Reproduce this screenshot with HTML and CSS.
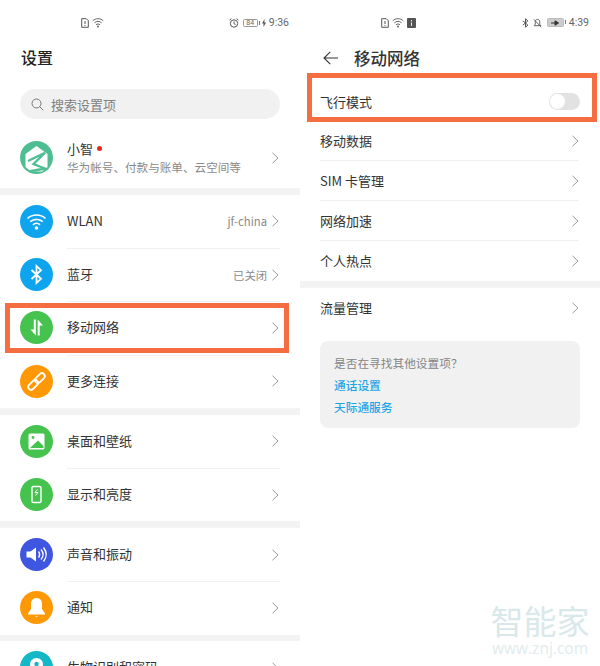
FILE: index.html
```html
<!DOCTYPE html>
<html lang="zh-CN">
<head>
<meta charset="utf-8">
<title>设置</title>
<link rel="stylesheet" href="styles.css">
</head>
<body>
<svg class="defs" width="0" height="0" aria-hidden="true">
  <symbol id="chev" viewBox="0 0 7 12"><path d="M.5 .8 6 6 .5 11.2" fill="none" stroke="#999" stroke-width="1"/></symbol>
</svg>
<main class="page">
  <section class="screen">
    <div class="status">
      <div class="status-left">
        <svg class="si" width="8" height="10" viewBox="0 0 8 10"><path d="M.7.7H5.3L7.3 2.7V9.3H.7Z" fill="none" stroke="#555"/><path d="M4 3V6M4 7V8" stroke="#555"/></svg>
        <svg class="si" width="12" height="10" viewBox="0 0 12 10"><path d="M.7 2.8C3.700 0 8.300 0 11.300 2.800M2.400 4.800C4.500 2.900 7.500 2.900 9.600 4.800M4 6.800C5.200 5.700 6.800 5.700 8 6.800" fill="none" stroke="#666"/><circle cx="6" cy="8.600" r="1" fill="#666"/></svg>
      </div>
      <div class="status-right">
        <svg class="si" width="10" height="10" viewBox="0 0 10 10"><circle cx="5" cy="5.500" r="3.700" fill="none" stroke="#555"/><path d="M5 3.500V5.700L6.500 6.500M.6 2.200 2.400.6M9.400 2.200 7.600.6" fill="none" stroke="#555"/></svg>
        <span class="batt"><span class="batt-num">84</span></span>
        <svg class="bolt" width="4" height="8" viewBox="0 0 4 8"><path d="M2.500 0 0 4.500H1.600L1.500 8 4 3.500H2.400Z" fill="#555"/></svg>
        <span class="time">9:36</span>
      </div>
    </div>
    <h1 class="page-title">设置</h1>
    <div class="search">
      <svg width="13" height="13" viewBox="0 0 13 13"><circle cx="5.500" cy="5.500" r="4.500" fill="none" stroke="#777"/><path d="M8.800 8.800 12.300 12.300" stroke="#777"/></svg>
      <span>搜索设置项</span>
    </div>
    <div class="profile">
      <svg class="icon" viewBox="0 0 33 33">
        <circle cx="16.500" cy="16.500" r="16.500" fill="#4fbd92"/>
        <path d="M16.500 5 27.500 13V26L22 30.500H11L5.500 26V13Z" fill="#fff"/>
        <path d="M8 20 25 11.800 13.500 23 25 27.500 9 30.500" fill="none" stroke="#4fbd92" stroke-width="2.300"/>
      </svg>
      <div class="profile-text">
        <div class="profile-name">小智<span class="red-dot"></span></div>
        <div class="profile-sub">华为帐号、付款与账单、云空间等</div>
      </div>
      <svg class="chev"><use href="#chev"/></svg>
    </div>

    <div class="band"></div>
    <div class="group">
      <div class="row">
        <span class="badge blue"><svg viewBox="0 0 33 33"><path d="M7.500 13.500C12.500 8.800 20.500 8.800 25.500 13.500M10.300 16.700C13.800 13.500 19.200 13.500 22.700 16.700M13 19.800C15 18 18 18 20 19.800" fill="none" stroke="#fff" stroke-width="1.700"/><circle cx="16.500" cy="23" r="1.800" fill="#fff"/></svg></span>
        <span class="label">WLAN</span><span class="value">jf-china</span>
        <svg class="chev"><use href="#chev"/></svg>
      </div>
      <div class="row">
        <span class="badge blue"><svg viewBox="0 0 33 33"><path d="M11.500 12 21 20.800 16.500 25V8L21 12.200 11.500 21" fill="none" stroke="#fff" stroke-width="1.800"/></svg></span>
        <span class="label">蓝牙</span><span class="value">已关闭</span>
        <svg class="chev"><use href="#chev"/></svg>
      </div>
      <div class="row">
        <span class="badge green"><svg viewBox="0 0 33 33"><path d="M15.800 8.500V24.500L10.500 18.500H13.800V8.500ZM17.700 24.500V8.500L23 14.500H19.700V24.500Z" fill="#fff"/></svg></span>
        <span class="label">移动网络</span>
        <svg class="chev"><use href="#chev"/></svg>
      </div>
      <div class="row">
        <span class="badge orange"><svg viewBox="0 0 33 33"><g fill="none" stroke="#fff" stroke-width="1.800" transform="rotate(-45 16.500 16.500)"><rect x="6" y="13.600" width="11.500" height="5.800" rx="2.900"/><rect x="15.500" y="13.600" width="11.500" height="5.800" rx="2.900"/></g></svg></span>
        <span class="label">更多连接</span>
        <svg class="chev"><use href="#chev"/></svg>
      </div>
    </div>

    <div class="band"></div>
    <div class="group">
      <div class="row">
        <span class="badge green"><svg viewBox="0 0 33 33"><rect x="8.500" y="8.500" width="16" height="16" rx="1.500" fill="#fff"/><circle cx="13" cy="12.500" r="1.400" fill="#46c24f"/><path d="M10 23 18 15.500 23.500 21V23Z" fill="#46c24f"/></svg></span>
        <span class="label">桌面和壁纸</span>
        <svg class="chev"><use href="#chev"/></svg>
      </div>
      <div class="row">
        <span class="badge green"><svg viewBox="0 0 33 33"><rect x="12" y="8.500" width="9" height="16" rx="1.200" fill="none" stroke="#fff" stroke-width="1.400"/><path d="M17.500 11.500 15 14.500H18L15.500 17.500" fill="none" stroke="#fff"/></svg></span>
        <span class="label">显示和亮度</span>
        <svg class="chev"><use href="#chev"/></svg>
      </div>
    </div>

    <div class="band"></div>
    <div class="group">
      <div class="row">
        <span class="badge indigo"><svg viewBox="0 0 33 33"><path d="M6.500 13.500H10.500L16 9.500V23.500L10.500 19.500H6.500Z" fill="#fff"/><path d="M18.500 13.500C20 15.500 20 17.500 18.500 19.500M21 11.500C23.500 14.500 23.500 18.500 21 21.500M23.500 9.500C27 14 27 19 23.500 23.500" fill="none" stroke="#fff" stroke-width="1.400"/></svg></span>
        <span class="label">声音和振动</span>
        <svg class="chev"><use href="#chev"/></svg>
      </div>
      <div class="row">
        <span class="badge orange"><svg viewBox="0 0 33 33"><path d="M16.500 7C20.500 7 22 10 22 13V18L25 22.500V23.500H8V22.500L11 18V13C11 10 12.500 7 16.500 7Z" fill="#fff"/><path d="M15 25.200H18L16.500 26.200Z" fill="#fff"/></svg></span>
        <span class="label">通知</span>
        <svg class="chev"><use href="#chev"/></svg>
      </div>
    </div>

    <div class="band"></div>
    <div class="group">
      <div class="row">
        <span class="badge teal"><svg viewBox="0 0 33 33"><path d="M16.500 7C12.500 7 10 10 10 13.500 10 18 16.500 25 16.500 25S23 18 23 13.500C23 10 20.500 7 16.500 7Z" fill="#fff"/><circle cx="16.500" cy="13" r="2.200" fill="#13b8c6"/></svg></span>
        <span class="label">生物识别和密码</span>
        <svg class="chev"><use href="#chev"/></svg>
      </div>
    </div>
    <div class="highlight highlight-left"></div>
  </section>

  <section class="screen">
    <div class="status">
      <div class="status-left">
        <svg class="si" width="8" height="10" viewBox="0 0 8 10"><path d="M.7.7H5.300L7.300 2.700V9.300H.7Z" fill="none" stroke="#555"/><path d="M4 3V6M4 7V8" stroke="#555"/></svg>
        <svg class="si" width="12" height="10" viewBox="0 0 12 10"><path d="M.7 2.800C3.700 0 8.300 0 11.300 2.800M2.400 4.800C4.500 2.900 7.500 2.900 9.600 4.800M4 6.800C5.200 5.700 6.800 5.700 8 6.800" fill="none" stroke="#666"/><circle cx="6" cy="8.600" r="1" fill="#666"/></svg>
        <svg class="si" width="9" height="10" viewBox="0 0 9 10"><rect width="9" height="10" rx="1" fill="#555"/><path d="M4.500 2V3.500M4.500 4.500V8" stroke="#eee"/></svg>
      </div>
      <div class="status-right">
        <svg class="si" width="7" height="10" viewBox="0 0 7 10"><path d="M.8 2.800 5.800 7 3.500 9.300V.7L5.800 3 .8 7.200" fill="none" stroke="#555"/></svg>
        <svg class="si si-bell" width="9" height="10" viewBox="0 0 10 10"><path d="M5 1C7 1 7.500 2.500 7.500 4V6.500L8.700 8H1.300L2.500 6.500V4C2.500 2.500 3 1 5 1ZM1 1 9 9.500" fill="none" stroke="#555"/></svg>
        <span class="batt batt-full"><svg width="8" height="6" viewBox="0 0 8 6"><path d="M0 3H4.500M4 .8 7.500 3 4 5.200Z" stroke="#333" fill="#333"/></svg></span>
        <span class="time">4:39</span>
      </div>
    </div>
    <div class="nav">
      <svg width="15" height="14" viewBox="0 0 15 14"><path d="M7.300.8 1 7 7.300 13.200M1 7H15" fill="none" stroke="#333" stroke-width="1.100"/></svg>
      <h1 class="nav-title">移动网络</h1>
    </div>
    <div class="list">
      <div class="item item-plain item-first"><span class="label">飞行模式</span><span class="toggle"><span class="knob"></span></span></div>
      <div class="item"><span class="label">移动数据</span><svg class="chev"><use href="#chev"/></svg></div>
      <div class="item"><span class="label">SIM 卡管理</span><svg class="chev"><use href="#chev"/></svg></div>
      <div class="item"><span class="label">网络加速</span><svg class="chev"><use href="#chev"/></svg></div>
      <div class="item item-plain"><span class="label">个人热点</span><svg class="chev"><use href="#chev"/></svg></div>
    </div>
    <div class="band"></div>
    <div class="list">
      <div class="item item-plain item-tall"><span class="label">流量管理</span><svg class="chev"><use href="#chev"/></svg></div>
    </div>
    <div class="card">
      <p class="card-q">是否在寻找其他设置项？</p>
      <p class="card-link">通话设置</p>
      <p class="card-link">天际通服务</p>
    </div>
    <div class="highlight highlight-right"></div>
    <div class="watermark">
      <div class="wm-cn">智能家</div>
      <div class="wm-url">www.znj.com</div>
    </div>
  </section>
</main>
</body>
</html>
```
FILE: styles.css
```css
* { box-sizing: border-box; }
html, body { margin: 0; padding: 0; background: #fff; }
body {
  width: 600px;
  height: 666px;
  overflow: hidden;
  font-family: "Noto Sans CJK SC", "Noto Sans", sans-serif;
  color: #333;
}
.defs { position: absolute; }
.page { display: flex; width: 600px; height: 666px; }
.screen { position: relative; width: 300px; height: 666px; overflow: hidden; flex: none; }

.status { display: flex; align-items: center; height: 45px; padding: 0 11px 0 81px; }
.status-left { display: flex; align-items: center; gap: 3px; }
.status-right { display: flex; align-items: center; margin-left: auto; }
.si { display: block; }
.si-bell { margin-left: 4px; }
.batt {
  position: relative;
  display: flex; align-items: center; justify-content: center;
  width: 15px; height: 8px; margin-left: 4px;
  border: 1px solid #999; border-radius: 1.500px;
}
.batt::after {
  content: ""; position: absolute; right: -3px; top: 1px;
  width: 1px; height: 4px; background: #777;
}
.batt-num { font-size: 7px; line-height: 7px; color: #666; font-family: "Liberation Sans", sans-serif; }
.batt-full { width: 17px; height: 9px; background: #ccc; border-color: #bbb; margin-left: 5px; margin-right: 2px; }
.bolt { margin-left: 4px; }
.time { margin-left: 3px; font-size: 10.500px; line-height: 12px; color: #666; font-family: "Roboto", sans-serif; }

.page-title { margin: 0 0 20px 21px; height: 24px; font-size: 16px; line-height: 24px; font-weight: 500; color: #222; }
.search {
  display: flex; align-items: center; gap: 7px;
  height: 30px; margin: 0 20px; padding-left: 11px;
  border-radius: 15px; background: #f1f1f1;
  font-size: 13px; color: #808080;
}
.profile { display: flex; align-items: center; height: 69px; padding: 8px 21px 0 20px; }
.icon { width: 33px; height: 33px; flex: none; }
.profile-text { flex: 1; margin-left: 14px; }
.profile-name { font-size: 13px; line-height: 19px; color: #333; display: flex; align-items: center; }
.profile-sub { font-size: 11.600px; line-height: 19px; color: #8a8a8a; white-space: nowrap; }
.red-dot { width: 5px; height: 5px; margin-left: 4px; border-radius: 50%; background: #e8291e; }
.chev { width: 7px; height: 12px; flex: none; }

.band { height: 6.670px; background: #f3f3f3; }
.group { display: flex; flex-direction: column; }
.row { position: relative; display: flex; align-items: center; height: 53.330px; padding: 0 21px 0 20px; }
.row + .row::before {
  content: ""; position: absolute; top: 0; left: 67px; right: 20px;
  height: 1px; background: #f1f1f1;
}
.badge { display: block; width: 33px; height: 33px; flex: none; border-radius: 50%; margin-right: 14px; }
.badge svg { display: block; width: 33px; height: 33px; }
.blue { background: #0ea5ee; }
.green { background: #46c24f; }
.orange { background: #ff9805; }
.indigo { background: #3f56e0; }
.teal { background: #13b8c6; }
.label { flex: 1; margin-bottom: 1px; font-size: 13px; line-height: 18px; color: #333; }
.item .label { margin-bottom: 0; }
.value { margin-right: 5px; font-size: 11.300px; line-height: 16px; color: #8a8a8a; }

.nav { display: flex; align-items: center; height: 26px; margin-bottom: 10px; padding-left: 23px; }
.nav-title { margin: 0 0 0 16px; font-size: 16.500px; line-height: 26px; font-weight: 500; color: #333; }
.list { padding: 0 21px 0 20px; }
.item { display: flex; align-items: center; height: 40px; border-bottom: 1px solid #f1f1f1; }
.item-plain { border-bottom: 0; }
.item-first { padding-top: 1px; }
.item-tall { height: 41px; }
.toggle {
  position: relative; display: block; width: 31px; height: 17px;
  margin-right: -1px; border-radius: 9px; background: #e2e2e2;
}
.knob {
  position: absolute; left: 1px; top: 1px; width: 15px; height: 15px;
  border-radius: 50%; background: #fff;
}
.card {
  margin: 12px 20px 0; height: 87px; padding: 11px 14px;
  border-radius: 8px; background: #f1f1f1;
  font-size: 11.700px; line-height: 22px;
}
.card p { margin: 0; }
.card-q { color: #858585; }
.card-link { color: #1ca5e6; font-weight: 500; }

.highlight { position: absolute; border: 5px solid #f56e41; pointer-events: none; }
.highlight-left { left: 5px; top: 303px; width: 284px; height: 50px; }
.highlight-right { left: 7px; top: 73px; width: 290px; height: 49px; }

.watermark { position: absolute; left: 190px; top: 602px; width: 100px; text-align: center; color: #d9e8ea; }
.wm-cn { font-size: 33px; line-height: 37px; white-space: nowrap; }
.wm-url { font-size: 15.500px; line-height: 18px; font-family: "Open Sans", sans-serif; white-space: nowrap; color: #e0ebed; }
```
